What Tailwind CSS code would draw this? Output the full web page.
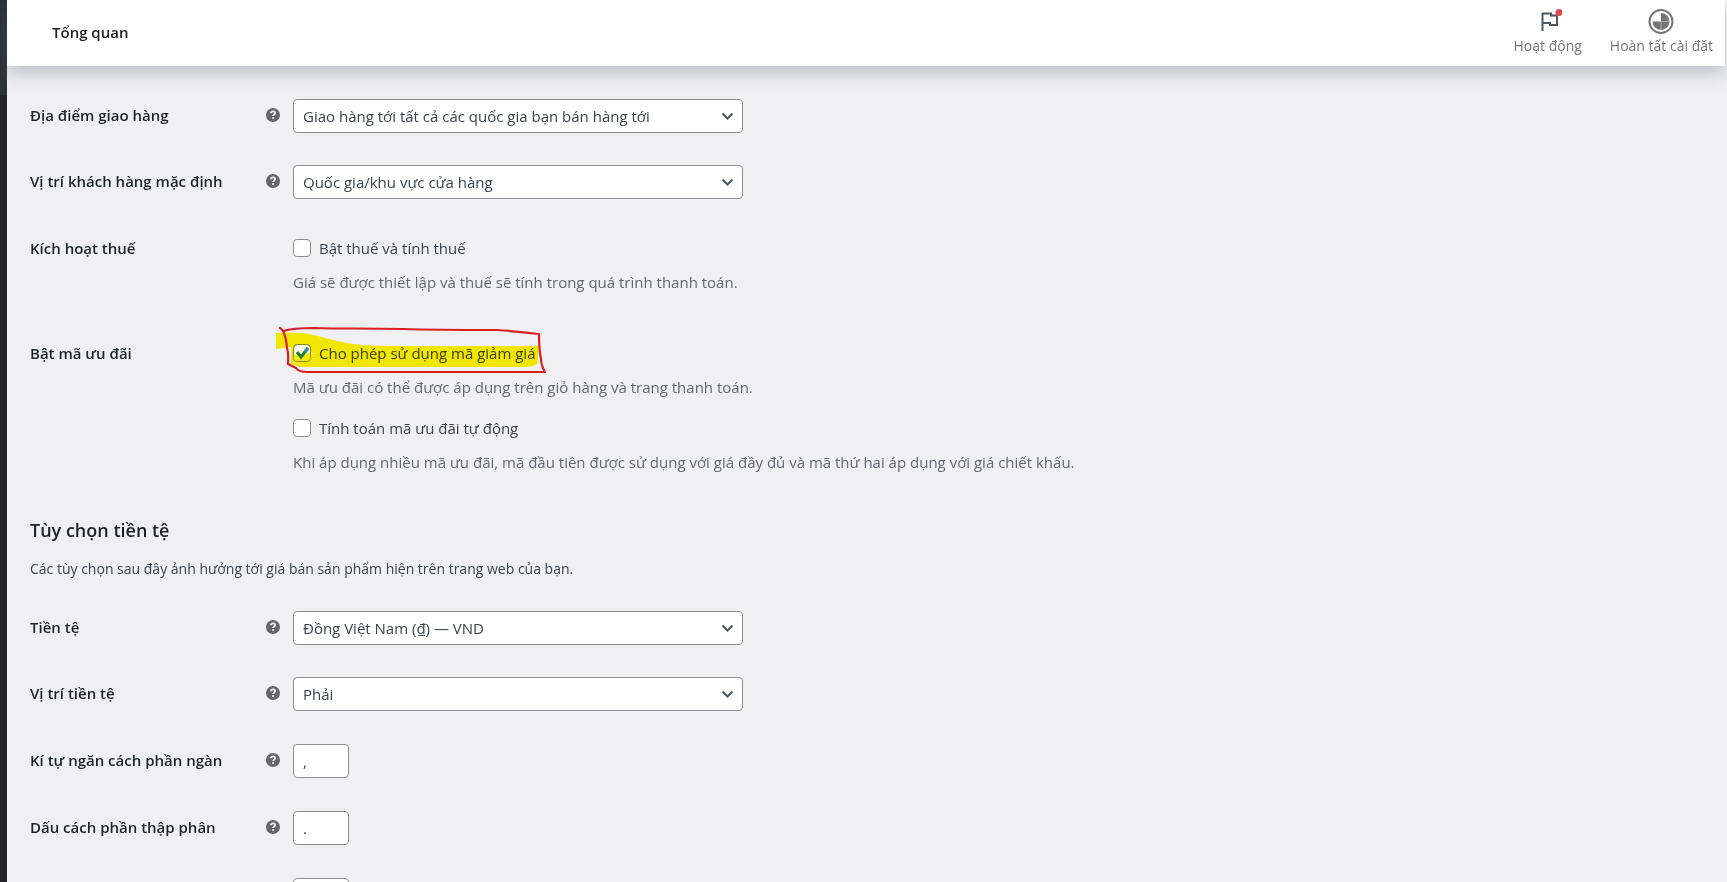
<!DOCTYPE html>
<html lang="vi">
<head>
<meta charset="utf-8">
<title>Tổng quan</title>
<meta name="viewport" content="width=device-width, initial-scale=1">
<script src="https://cdn.jsdelivr.net/npm/@tailwindcss/browser@4"></script>
</head>
<body class="flex h-screen overflow-hidden bg-[#f0f0f2] font-['Open_Sans','Noto_Sans',sans-serif] text-[15px] leading-6 text-[#3c434a]">
<svg class="hidden" aria-hidden="true">
  <symbol id="help" viewBox="0 0 14 14">
    <circle cx="7" cy="7" r="7" fill="#666"/>
    <path d="M4.9 5.3c0-1.3 1-1.9 2.1-1.9 1.3 0 2.1.7 2.1 1.7 0 1.5-1.9 1.5-1.9 2.900" fill="none" stroke="#f0f0f1" stroke-width="1.8"/>
    <rect x="6.2" y="9.1" width="1.9" height="1.8" fill="#f0f0f1"/>
  </symbol>
  <symbol id="chevron" viewBox="0 0 14 14">
    <path d="m1.500 4.500 5 5 5-5" fill="none" stroke="#50575e" stroke-width="2"/>
  </symbol>
</svg>

<aside class="flex w-[7px] shrink-0 flex-col bg-[#1d2327]"><div class="h-[95px] bg-[#2c3338]"></div></aside>

<div class="flex min-w-0 flex-1 flex-col">
  <header class="mr-0.5 flex h-[66px] shrink-0 items-center justify-between bg-white pr-3 pb-0.5 pl-[45px] shadow-[0_8px_16px_0_rgba(85,93,102,0.3)]">
    <h1 class="text-[15px] font-semibold text-[#1e1e1e]">Tổng quan</h1>
    <div class="flex gap-7 text-sm leading-5 text-[#757575]">
      <button type="button" class="flex flex-col items-center">
        <svg class="h-7 w-7" viewBox="0 0 28 28" aria-hidden="true">
          <path d="M8.500 23V5.500h8.500v2h6v9.500h-7v-2h-7.500" fill="none" stroke="#50575e" stroke-width="2"/>
          <circle cx="25" cy="4.500" r="3.500" fill="#d94f4f"/>
        </svg>
        Hoạt động
      </button>
      <button type="button" class="flex flex-col items-center">
        <svg class="h-7 w-7" viewBox="0 0 28 28" aria-hidden="true">
          <circle cx="14" cy="13.500" r="11.500" fill="none" stroke="#757575" stroke-width="2"/>
          <path d="M14 13.500V5a8.500 8.500 0 1 1-8.500 8.500z" fill="#757575"/>
          <path d="M14 13.500v8.500M14 13.500h8.500" stroke="#aaa" stroke-width="1"/>
        </svg>
        Hoàn tất cài đặt
      </button>
    </div>
  </header>

  <form class="px-[23px] pt-[17px]">
    <div class="flex h-[66px] items-center">
      <div class="flex w-[263px] items-center justify-between pr-[13px] pb-0.5">
        <label for="ship" class="font-semibold text-[#1d2327]">Địa điểm giao hàng</label>
        <svg class="h-3.5 w-3.5"><use href="#help"/></svg>
      </div>
      <div class="relative w-full max-w-[450px]">
        <select id="ship" class="block h-[34px] w-full appearance-none rounded-[4px] border border-[#8c8f94] bg-white pr-8 pl-[9px] text-[#3c434a]"><option>Giao hàng tới tất cả các quốc gia bạn bán hàng tới</option></select>
        <svg class="pointer-events-none absolute top-2.5 right-2 h-3.5 w-3.5"><use href="#chevron"/></svg>
      </div>
    </div>

    <div class="flex h-[66px] items-center">
      <div class="flex w-[263px] items-center justify-between pr-[13px] pb-0.5">
        <label for="loc" class="font-semibold text-[#1d2327]">Vị trí khách hàng mặc định</label>
        <svg class="h-3.5 w-3.5"><use href="#help"/></svg>
      </div>
      <div class="relative w-full max-w-[450px]">
        <select id="loc" class="block h-[34px] w-full appearance-none rounded-[4px] border border-[#8c8f94] bg-white pr-8 pl-[9px] text-[#3c434a]"><option>Quốc gia/khu vực cửa hàng</option></select>
        <svg class="pointer-events-none absolute top-2.5 right-2 h-3.5 w-3.5"><use href="#chevron"/></svg>
      </div>
    </div>

    <fieldset class="flex h-[105px] pt-[21px]">
      <div class="w-[263px] shrink-0 font-semibold text-[#1d2327]">Kích hoạt thuế</div>
      <div>
        <label class="flex items-center gap-2">
          <input type="checkbox" class="h-[18px] w-[18px] appearance-none rounded-[4px] border border-[#8c8f94] bg-white">
          Bật thuế và tính thuế
        </label>
        <p class="mt-2.5 text-[#646970]">Giá sẽ được thiết lập và thuế sẽ tính trong quá trình thanh toán.</p>
      </div>
    </fieldset>

    <fieldset class="flex pt-[21px]">
      <div class="w-[263px] shrink-0 font-semibold text-[#1d2327]">Bật mã ưu đãi</div>
      <div>
        <div class="relative w-fit">
          <label class="flex items-center gap-2">
            <input type="checkbox" checked class="h-[18px] w-[18px] appearance-none rounded-[4px] border border-[#8c8f94] bg-white">
            Cho phép sử dụng mã giảm giá
          </label>
          <!-- Highlighter and red pen marks -->
          <svg class="pointer-events-none absolute -top-4 -left-5 h-[52px] w-[280px] mix-blend-multiply" viewBox="0 0 280 52" aria-hidden="true">
            <path d="M3 8C20 7 30 7 45 11C65 17 85 21 112 21H265V38C262 41 257 42 250 42H27L18 39V22L3 24z" fill="#fff500"/>
          </svg>
          <svg class="pointer-events-none absolute -top-4 -left-5 h-[52px] w-[280px]" viewBox="0 0 280 52" aria-hidden="true">
            <rect x="20.500" y="19.500" width="17" height="17" rx="4" fill="#fffef0" stroke="#8a8418"/>
            <path d="M21 30v3q0 3 3 3h10q3 0 3-3v-5z" fill="#f4ea10"/>
            <path d="M38 28.500h4" stroke="#faf7a0" stroke-width="1"/>
            <path d="m24 27 4 5 7-9" fill="none" stroke="#1d7f2c" stroke-width="3"/>
            <path d="m32 27 3-4" stroke="#3b83a8" stroke-width="3"/>
            <path d="M7 3C11 5 13 13 14 23C16 29 15 35 15 39L23 43C25 46 29 47 34 47H272C269 42 268 38 268 34C266 25 266 17 266 9C250 7 240 6 224 5C190 5 160 5 130 4C90 3 70 4 42 3C30 3 18 3 11 6" fill="none" stroke="#d81f26" stroke-width="2.200" stroke-linecap="round" stroke-linejoin="round"/>
          </svg>
        </div>
        <p class="mt-2.5 text-[#646970]">Mã ưu đãi có thể được áp dụng trên giỏ hàng và trang thanh toán.</p>
        <label class="mt-[17px] flex items-center gap-2">
          <input type="checkbox" class="h-[18px] w-[18px] appearance-none rounded-[4px] border border-[#8c8f94] bg-white">
          Tính toán mã ưu đãi tự động
        </label>
        <p class="mt-2.5 text-[#646970]">Khi áp dụng nhiều mã ưu đãi, mã đầu tiên được sử dụng với giá đầy đủ và mã thứ hai áp dụng với giá chiết khấu.</p>
      </div>
    </fieldset>

    <h2 class="mt-11 text-[18px] font-semibold text-[#1d2327]">Tùy chọn tiền tệ</h2>
    <p class="mt-[15px] mb-3.5 text-sm leading-6">Các tùy chọn sau đây ảnh hưởng tới giá bán sản phẩm hiện trên trang web của bạn.</p>

    <div class="flex h-[66px] items-center">
      <div class="flex w-[263px] items-center justify-between pr-[13px] pb-0.5">
        <label for="cur" class="font-semibold text-[#1d2327]">Tiền tệ</label>
        <svg class="h-3.5 w-3.5"><use href="#help"/></svg>
      </div>
      <div class="relative w-full max-w-[450px]">
        <select id="cur" class="block h-[34px] w-full appearance-none rounded-[4px] border border-[#8c8f94] bg-white pr-8 pl-[9px] text-[#3c434a]"><option>Đồng Việt Nam (₫) — VND</option></select>
        <svg class="pointer-events-none absolute top-2.5 right-2 h-3.5 w-3.5"><use href="#chevron"/></svg>
      </div>
    </div>

    <div class="flex h-[66px] items-center">
      <div class="flex w-[263px] items-center justify-between pr-[13px] pb-0.5">
        <label for="pos" class="font-semibold text-[#1d2327]">Vị trí tiền tệ</label>
        <svg class="h-3.5 w-3.5"><use href="#help"/></svg>
      </div>
      <div class="relative w-full max-w-[450px]">
        <select id="pos" class="block h-[34px] w-full appearance-none rounded-[4px] border border-[#8c8f94] bg-white pr-8 pl-[9px] text-[#3c434a]"><option>Phải</option></select>
        <svg class="pointer-events-none absolute top-2.5 right-2 h-3.5 w-3.5"><use href="#chevron"/></svg>
      </div>
    </div>

    <div class="flex h-[67px] items-center">
      <div class="flex w-[263px] items-center justify-between pr-[13px] pb-0.5">
        <label for="thou" class="font-semibold text-[#1d2327]">Kí tự ngăn cách phần ngàn</label>
        <svg class="h-3.5 w-3.5"><use href="#help"/></svg>
      </div>
      <input id="thou" type="text" value="," class="h-[34px] w-14 rounded-[4px] border border-[#8c8f94] bg-white px-[9px] text-[#3c434a]">
    </div>

    <div class="flex h-[67px] items-center">
      <div class="flex w-[263px] items-center justify-between pr-[13px] pb-0.5">
        <label for="dec" class="font-semibold text-[#1d2327]">Dấu cách phần thập phân</label>
        <svg class="h-3.5 w-3.5"><use href="#help"/></svg>
      </div>
      <input id="dec" type="text" value="." class="h-[34px] w-14 rounded-[4px] border border-[#8c8f94] bg-white px-[9px] text-[#3c434a]">
    </div>

    <div class="flex h-[67px] items-center">
      <div class="w-[263px]"></div>
      <input type="number" aria-label="Số chữ số thập phân" class="h-[34px] w-14 rounded-[4px] border border-[#8c8f94] bg-white px-[9px]">
    </div>
  </form>
</div>
</body>
</html>
